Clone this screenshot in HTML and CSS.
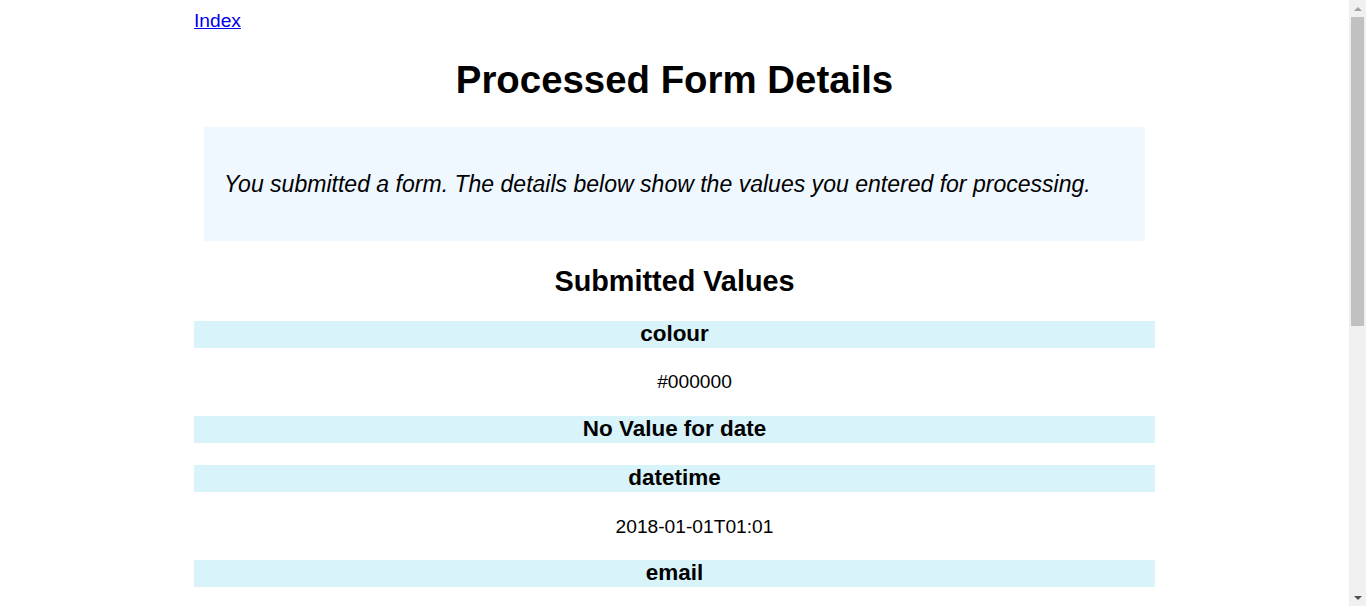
FILE: index.html
```html
<!DOCTYPE html>
<html lang="en">
<head>
<meta charset="utf-8">
<title>Processed Form Details</title>
<link rel="stylesheet" href="styles.css">
</head>
<body>
<div class="page">
  <div class="nav"><a href="#">Index</a></div>
  <h1 class="title">Processed Form Details</h1>
  <div class="explanation">
    <p>You submitted a form. The details below show the values you entered for processing.</p>
  </div>
  <h2 class="subtitle">Submitted Values</h2>
  <div class="fields">
    <h3 class="field-name">colour</h3>
    <p class="field-value">#000000</p>
    <h3 class="field-name">No Value for date</h3>
    <h3 class="field-name">datetime</h3>
    <p class="field-value">2018-01-01T01:01</p>
    <h3 class="field-name">email</h3>
    <p class="field-value">test@example.com</p>
    <h3 class="field-name">month</h3>
    <p class="field-value">2018-01</p>
  </div>
</div>
<div class="scrollbar" aria-hidden="true">
  <div class="sb-btn"><span class="sb-arrow sb-up"></span></div>
  <div class="sb-track"><div class="sb-thumb"></div></div>
  <div class="sb-btn"><span class="sb-arrow sb-down"></span></div>
</div>
</body>
</html>
```

FILE: styles.css
```css
html {
  font-size: 16px;
}
body {
  margin: 8px 25px 8px 8px;
  font-family: "Liberation Sans", Arial, sans-serif;
  font-size: 1.2em;
  line-height: 1.2;
  color: #000;
  background: #fff;
}
.page {
  max-width: 961px;
  margin: 0 auto;
}
.nav {
  padding-top: 1px;
}
.nav a {
  color: #0000ee;
}
.title {
  font-size: 2em;
  line-height: normal;
  margin: 0.67em 0;
  text-align: center;
}
.explanation {
  margin: 10px;
  padding: 20px;
  background: #eff7ff;
}
.explanation p {
  font-size: 1.2em;
  font-style: italic;
  margin: 1em 0;
}
.subtitle {
  font-size: 1.5em;
  line-height: 32px;
  margin: 0.83em 0;
  text-align: center;
}
.field-name {
  font-size: 1.17em;
  margin: 1em 0;
  text-align: center;
  background: #d9f3fa;
}
.field-value {
  margin: 1em 0 1em 40px;
  text-align: center;
}

/* browser scrollbar as shown in the screenshot */
.scrollbar {
  position: fixed;
  top: 0;
  right: 0;
  bottom: 0;
  width: 17px;
  background: #f0f0f0;
  display: flex;
  flex-direction: column;
}
.sb-btn {
  height: 17px;
  display: flex;
  align-items: center;
  justify-content: center;
}
.sb-track {
  flex: 1;
  padding: 0 2px;
}
.sb-thumb {
  height: 309px;
  background: #c1c1c1;
}
.sb-arrow {
  width: 0;
  height: 0;
  border-left: 4px solid transparent;
  border-right: 4px solid transparent;
}
.sb-up {
  border-bottom: 4px solid #a3a3a3;
}
.sb-down {
  border-top: 4px solid #505050;
}
```
